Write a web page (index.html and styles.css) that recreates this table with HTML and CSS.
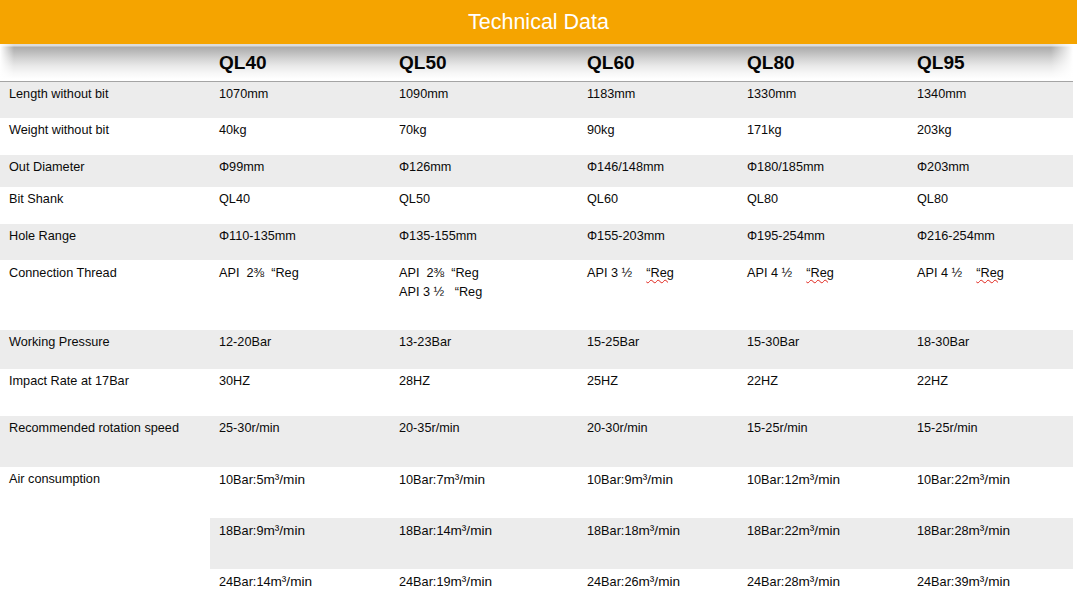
FILE: index.html
```html
<!DOCTYPE html>
<html lang="en">
<head>
<meta charset="utf-8">
<title>Technical Data</title>
<link rel="stylesheet" href="styles.css">
</head>
<body>
<div class="title">Technical Data</div>
<div class="specs">
  <div class="row head">
    <div class="cell"></div>
    <div class="cell">QL40</div>
    <div class="cell">QL50</div>
    <div class="cell">QL60</div>
    <div class="cell">QL80</div>
    <div class="cell">QL95</div>
  </div>
  <div class="row shade r36">
    <div class="cell">Length without bit</div>
    <div class="cell">1070mm</div>
    <div class="cell">1090mm</div>
    <div class="cell">1183mm</div>
    <div class="cell">1330mm</div>
    <div class="cell">1340mm</div>
  </div>
  <div class="row r37">
    <div class="cell">Weight without bit</div>
    <div class="cell">40kg</div>
    <div class="cell">70kg</div>
    <div class="cell">90kg</div>
    <div class="cell">171kg</div>
    <div class="cell">203kg</div>
  </div>
  <div class="row shade r32">
    <div class="cell">Out Diameter</div>
    <div class="cell">Φ99mm</div>
    <div class="cell">Φ126mm</div>
    <div class="cell">Φ146/148mm</div>
    <div class="cell">Φ180/185mm</div>
    <div class="cell">Φ203mm</div>
  </div>
  <div class="row r37">
    <div class="cell">Bit Shank</div>
    <div class="cell">QL40</div>
    <div class="cell">QL50</div>
    <div class="cell">QL60</div>
    <div class="cell">QL80</div>
    <div class="cell">QL80</div>
  </div>
  <div class="row shade r36">
    <div class="cell">Hole Range</div>
    <div class="cell">Φ110-135mm</div>
    <div class="cell">Φ135-155mm</div>
    <div class="cell">Φ155-203mm</div>
    <div class="cell">Φ195-254mm</div>
    <div class="cell">Φ216-254mm</div>
  </div>
  <div class="row thread r70">
    <div class="cell">Connection Thread</div>
    <div class="cell pre">API  2⅜  “Reg</div>
    <div class="cell pre">API  2⅜  “Reg<br>API 3 ½   “Reg</div>
    <div class="cell pre">API 3 ½    <span class="spell">“Reg</span></div>
    <div class="cell pre">API 4 ½    <span class="spell">“Reg</span></div>
    <div class="cell pre">API 4 ½    <span class="spell">“Reg</span></div>
  </div>
  <div class="row shade r39">
    <div class="cell">Working Pressure</div>
    <div class="cell">12-20Bar</div>
    <div class="cell">13-23Bar</div>
    <div class="cell">15-25Bar</div>
    <div class="cell">15-30Bar</div>
    <div class="cell">18-30Bar</div>
  </div>
  <div class="row r47">
    <div class="cell">Impact Rate at 17Bar</div>
    <div class="cell">30HZ</div>
    <div class="cell">28HZ</div>
    <div class="cell">25HZ</div>
    <div class="cell">22HZ</div>
    <div class="cell">22HZ</div>
  </div>
  <div class="row shade r51">
    <div class="cell">Recommended rotation speed</div>
    <div class="cell">25-30r/min</div>
    <div class="cell">20-35r/min</div>
    <div class="cell">20-30r/min</div>
    <div class="cell">15-25r/min</div>
    <div class="cell">15-25r/min</div>
  </div>
  <div class="row air">
    <div class="cell label">Air consumption</div>
    <div class="cell">10Bar:5<span class="unit">m³/min</span></div>
    <div class="cell">10Bar:7<span class="unit">m³/min</span></div>
    <div class="cell">10Bar:9<span class="unit">m³/min</span></div>
    <div class="cell">10Bar:12<span class="unit">m³/min</span></div>
    <div class="cell">10Bar:22<span class="unit">m³/min</span></div>
    <div class="cell shade">18Bar:9<span class="unit">m³/min</span></div>
    <div class="cell shade">18Bar:14<span class="unit">m³/min</span></div>
    <div class="cell shade">18Bar:18<span class="unit">m³/min</span></div>
    <div class="cell shade">18Bar:22<span class="unit">m³/min</span></div>
    <div class="cell shade">18Bar:28<span class="unit">m³/min</span></div>
    <div class="cell">24Bar:14<span class="unit">m³/min</span></div>
    <div class="cell">24Bar:19<span class="unit">m³/min</span></div>
    <div class="cell">24Bar:26<span class="unit">m³/min</span></div>
    <div class="cell">24Bar:28<span class="unit">m³/min</span></div>
    <div class="cell">24Bar:39<span class="unit">m³/min</span></div>
  </div>
</div>
</body>
</html>
```
FILE: styles.css
```css
html, body {
  margin: 0;
  padding: 0;
  background: #ffffff;
}

body {
  width: 1077px;
  height: 608px;
  overflow: hidden;
  font-family: "Liberation Sans", Arial, sans-serif;
  color: #0a0a0a;
}

.title {
  box-sizing: border-box;
  height: 44px;
  padding-top: 10px;
  background: #f5a400;
  color: #ffffff;
  font-size: 21.5px;
  line-height: 24px;
  text-align: center;
}

.specs {
  width: 1073px;
}

.row {
  display: grid;
  grid-template-columns: 210px 180px 188px 160px 170px 165px;
  box-sizing: border-box;
  font-size: 12.7px;
  line-height: 15px;
}

.cell {
  padding: 5px 0 0 9px;
}

.shade {
  background: #ececec;
}

.head {
  height: 38px;
  border-bottom: 1px solid #a4a4a4;
  background:
    linear-gradient(to right, #ffffff 0, rgba(255,255,255,0) 14px, rgba(255,255,255,0) calc(100% - 22px), #ffffff 100%),
    linear-gradient(to bottom, #dcdcdc 0, #dcdcdc 2px, #ababab 3px, #bcbcbc 8px, #d4d4d4 15px, #e9e9e9 22px, #f7f7f7 29px, #ffffff 35px);
  font-size: 19px;
  font-weight: bold;
  line-height: 22px;
  color: #050505;
}

.head .cell {
  padding-top: 8px;
}

.r32 { height: 32px; }
.r36 { height: 36px; }
.r37 { height: 37px; }
.r39 { height: 39px; }
.r47 { height: 47px; }
.r51 { height: 51px; }
.r70 { height: 70px; }

.thread {
  line-height: 19px;
}

.thread .cell {
  padding-top: 4px;
}

.pre {
  white-space: pre;
}

.spell {
  text-decoration: underline wavy #e0241b;
  text-decoration-thickness: 1px;
  text-underline-offset: 2px;
}

.air {
  grid-template-rows: 51px 51px 39px;
}

.air .label {
  grid-row: 1 / span 3;
}

.unit {
  font-size: 13.6px;
}
```
